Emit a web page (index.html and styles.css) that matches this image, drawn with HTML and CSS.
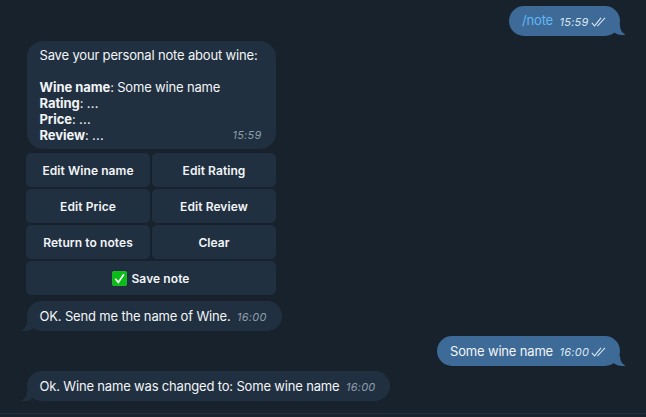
FILE: index.html
```
<!DOCTYPE html>
<html lang="en">
<head>
<meta charset="utf-8">
<title>Wine notes chat</title>
<link rel="stylesheet" href="styles.css">
</head>
<body>
<main class="chat">
  <div class="bubble out">
    <span class="command">/note</span>
    <span class="time">15:59</span>
    <svg class="checks" viewBox="0 0 15 10"><path d="M.8 5.8 3.6 8.8 10 .9M6.2 8.8h.5L14 .9"/></svg>
    <svg class="tail" viewBox="0 0 14 12"><path d="M8 0C8 6 10 9 13.5 10.5 10 11.6 5 11 1.5 8Z"/></svg>
  </div>
  <section class="card">
    <p>Save your personal note about wine:</p>
    <p class="spaced"><b>Wine name</b>: Some wine name</p>
    <p><b>Rating</b>: <span class="dots">...</span></p>
    <p><b>Price</b>: <span class="dots">...</span></p>
    <div class="last"><p><b>Review</b>: <span class="dots">...</span></p><span class="time">15:59</span></div>
  </section>
  <div class="keyboard">
    <button>Edit Wine name</button>
    <button>Edit Rating</button>
    <button>Edit Price</button>
    <button>Edit Review</button>
    <button>Return to notes</button>
    <button>Clear</button>
    <button class="wide"><svg class="tick" viewBox="0 0 15 15"><rect x=".3" y=".3" width="14.4" height="14.4" rx="1.8" fill="#08bd13" stroke="#35d23c" stroke-width=".6"/><path d="M3.3 7.7 6.3 11.4 11.9 3.2" fill="none" stroke="#fff" stroke-width="1.7"/></svg>Save note</button>
  </div>
  <div class="bubble in">
    <span class="text">OK. Send me the name of Wine.</span>
    <span class="time">16:00</span>
    <svg class="tail" viewBox="0 0 14 12"><path d="M8 0C8 6 10 9 13.5 10.5 10 11.6 5 11 1.5 8Z"/></svg>
  </div>
  <div class="bubble out">
    <span class="text">Some wine name</span>
    <span class="time">16:00</span>
    <svg class="checks" viewBox="0 0 15 10"><path d="M.8 5.8 3.6 8.8 10 .9M6.2 8.8h.5L14 .9"/></svg>
    <svg class="tail" viewBox="0 0 14 12"><path d="M8 0C8 6 10 9 13.5 10.5 10 11.6 5 11 1.5 8Z"/></svg>
  </div>
  <div class="bubble in">
    <span class="text">Ok. Wine name was changed to: Some wine name</span>
    <span class="time">16:00</span>
    <svg class="tail" viewBox="0 0 14 12"><path d="M8 0C8 6 10 9 13.5 10.5 10 11.6 5 11 1.5 8Z"/></svg>
  </div>
</main>
<footer class="composer"></footer>
</body>
</html>
```
FILE: styles.css
```
* { box-sizing: border-box; }
body {
  margin: 0;
  height: 417px;
  overflow: hidden;
  display: flex;
  flex-direction: column;
  background: #18222c;
  color: #f2f5f7;
  font: 13px/16px Inter, "Liberation Sans", sans-serif;
  letter-spacing: -.17px;
}
p { margin: 0; white-space: nowrap; }
b { font-weight: 700; letter-spacing: -.06px; }
.dots { letter-spacing: .2px; }
.chat {
  flex: 1;
  min-height: 0;
  display: flex;
  flex-direction: column;
  align-items: flex-start;
  gap: 5px;
  padding: 5.5px 26px 0 26.5px;
}
.bubble {
  position: relative;
  flex: none;
  display: flex;
  align-items: center;
  height: 30px;
  padding: 0 13px 1px;
  border-radius: 15px;
  white-space: nowrap;
}
.in { background: #213040; width: 255px; }
.in:last-child { width: 363px; }
.out { align-self: flex-end; background: #3d6a97; width: 183px; }
.out:first-child { width: 111px; }
.command { color: #62b8f4; }
.time {
  margin: 3px 0 0 6.5px;
  font-size: 11px;
  font-style: italic;
  letter-spacing: .25px;
  color: #8d9dac;
}
.out .time { color: #d9e7f3; }
.checks {
  flex: none;
  width: 15px;
  height: 10px;
  margin: 3px 0 0 2px;
  fill: none;
  stroke: #d9e7f3;
  stroke-width: 1.1;
}
.tail {
  position: absolute;
  right: -6px;
  bottom: -.5px;
  width: 14px;
  height: 12px;
  fill: #3d6a97;
}
.in .tail {
  right: auto;
  left: -6px;
  transform: scaleX(-1);
  fill: #213040;
}
.card {
  flex: none;
  width: 249px;
  height: 108px;
  padding: 6.5px 13px 0;
  border-radius: 16px;
  background: #213040;
}
.spaced { margin-top: 16px; }
.last { display: flex; justify-content: space-between; }
.last .time { margin: 0 1px 0 0; }
.keyboard {
  flex: none;
  width: 250px;
  display: grid;
  grid-template-columns: 1fr 1fr;
  grid-auto-rows: 34px;
  gap: 2px;
  margin: -.5px 0 1.2px -.5px;
}
button {
  display: flex;
  align-items: center;
  justify-content: center;
  padding: 1px 0 0;
  border: 0;
  border-radius: 5px;
  background: #213040;
  color: #f2f5f7;
  font: 600 12px/16px Inter, "Liberation Sans", sans-serif;
  letter-spacing: .08px;
}
.wide { grid-column: span 2; }
.tick { width: 15px; height: 15px; margin-right: 4px; }
.composer {
  flex: none;
  height: 4px;
  border-top: 1px solid #213040;
}
```
